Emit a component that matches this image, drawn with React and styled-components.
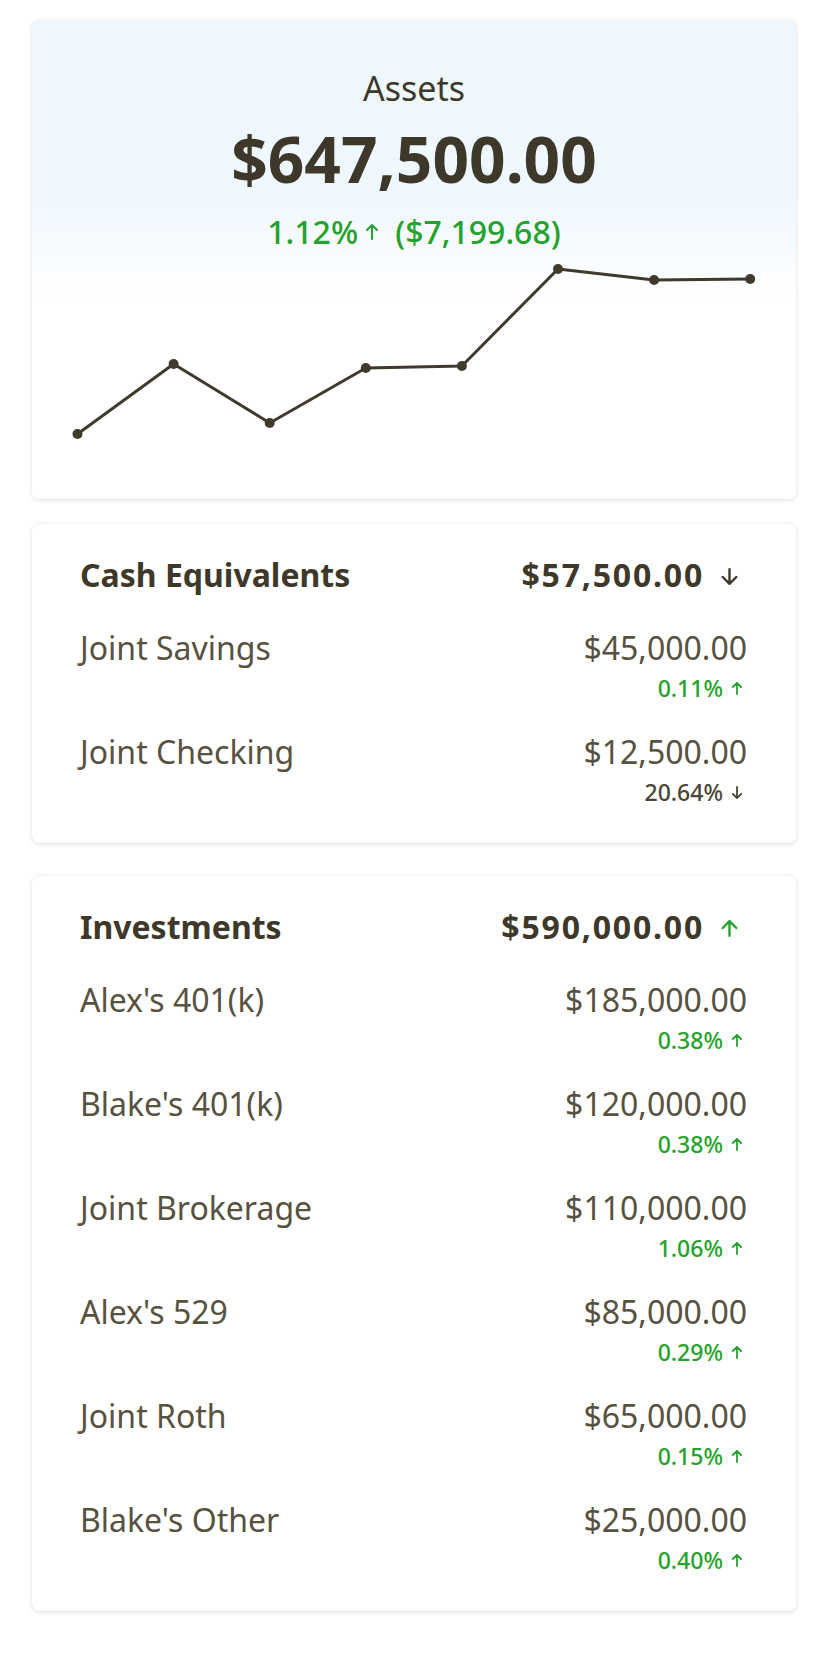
import styled, { createGlobalStyle } from "styled-components";

const GlobalStyle = createGlobalStyle`
	body {
		margin: 0;
		background: #ffffff;
		font-family: "Noto Sans", "Open Sans", sans-serif;
		color: #3d3829;
	}
`;

const history = [184, 114, 173, 118, 116, 19, 30, 29];

const groups = [
	{
		name: "Cash Equivalents",
		total: "$57,500.00",
		up: false,
		accounts: [
			{ name: "Joint Savings", amount: "$45,000.00", change: "0.11%", up: true },
			{ name: "Joint Checking", amount: "$12,500.00", change: "20.64%", up: false },
		],
	},
	{
		name: "Investments",
		total: "$590,000.00",
		up: true,
		accounts: [
			{ name: "Alex's 401(k)", amount: "$185,000.00", change: "0.38%", up: true },
			{ name: "Blake's 401(k)", amount: "$120,000.00", change: "0.38%", up: true },
			{ name: "Joint Brokerage", amount: "$110,000.00", change: "1.06%", up: true },
			{ name: "Alex's 529", amount: "$85,000.00", change: "0.29%", up: true },
			{ name: "Joint Roth", amount: "$65,000.00", change: "0.15%", up: true },
			{ name: "Blake's Other", amount: "$25,000.00", change: "0.40%", up: true },
		],
	},
];

function Arrow({ up, w, h, stroke, className }) {
	const head = Math.min(w / 2 - stroke / 2, h * 0.4);
	const cx = w / 2;
	const top = stroke / 2;
	const bottom = h - stroke / 2;
	const d = up
		? `M${cx} ${bottom}V${top}M${cx - head} ${top + head}L${cx} ${top}L${cx + head} ${top + head}`
		: `M${cx} ${top}V${bottom}M${cx - head} ${bottom - head}L${cx} ${bottom}L${cx + head} ${bottom - head}`;
	return (
		<svg className={className} width={w} height={h} viewBox={`0 0 ${w} ${h}`}>
			<path d={d} fill="none" stroke="currentColor" strokeWidth={stroke} strokeLinecap="round" strokeLinejoin="round" />
		</svg>
	);
}

function Chart() {
	const step = 96.1;
	const pts = history.map((y, i) => [45.5 + i * step, y]);
	return (
		<ChartSvg viewBox="0 0 764 220" preserveAspectRatio="none">
			<polyline
				points={pts.map((p) => p.join(",")).join(" ")}
				fill="none"
				stroke="#3f3a2c"
				strokeWidth="3"
				strokeLinejoin="round"
			/>
			{pts.map(([x, y], i) => (
				<circle key={i} cx={x} cy={y} r="5" fill="#3f3a2c" />
			))}
		</ChartSvg>
	);
}

export default function App() {
	return (
		<>
			<GlobalStyle />
			<Page>
				<SummaryCard>
					<Title>Assets</Title>
					<Total>$647,500.00</Total>
					<Change>
						1.12%
						<Arrow up w={12} h={16} stroke={2} className="arrow" />
						($7,199.68)
					</Change>
					<Chart />
				</SummaryCard>

				<Groups>
					{groups.map((g) => (
						<GroupCard key={g.name}>
							<GroupHead>
								<GroupName>{g.name}</GroupName>
								<GroupTotal $up={g.up}>
									{g.total}
									<Arrow up={g.up} w={17} h={17} stroke={2.4} className="arrow" />
								</GroupTotal>
							</GroupHead>
							<Rows>
								{g.accounts.map((a) => (
									<Row key={a.name}>
										<AccountName>{a.name}</AccountName>
										<Figures>
											<Amount>{a.amount}</Amount>
											<Pct $up={a.up}>
												{a.change}
												<Arrow up={a.up} w={10} h={13} stroke={1.8} className="arrow" />
											</Pct>
										</Figures>
									</Row>
								))}
							</Rows>
						</GroupCard>
					))}
				</Groups>
			</Page>
		</>
	);
}

const Page = styled.div`
	display: flex;
	flex-direction: column;
	gap: 25px;
	padding: 20px 34px 40px 32px;
`;

const Card = styled.section`
	background: #ffffff;
	border-radius: 7px;
	box-shadow: 0 1px 4px rgba(60, 50, 30, 0.16), 0 0 1px rgba(60, 50, 30, 0.08);
`;

const SummaryCard = styled(Card)`
	display: flex;
	flex-direction: column;
	align-items: center;
	padding: 48px 0 29px;
	background: linear-gradient(180deg, #edf7fd 0%, #eff8fe 36%, #f7fbff 48%, #ffffff 58%);
`;

const Title = styled.div`
	font-size: 34px;
	line-height: 40px;
	font-weight: 400;
	color: #3d3829;
`;

const Total = styled.div`
	margin-top: 15px;
	font-size: 64px;
	line-height: 72px;
	font-weight: 700;
	color: #3d3829;
`;

const Change = styled.div`
	margin-top: 19px;
	display: flex;
	align-items: center;
	font-size: 32px;
	line-height: 36px;
	font-weight: 500;
	color: #25a22c;
	.arrow {
		margin: 0 17px 0 8px;
	}
`;

const ChartSvg = styled.svg`
	display: block;
	width: 100%;
	height: 220px;
`;

const Groups = styled.div`
	display: flex;
	flex-direction: column;
	gap: 33px;
`;

const GroupCard = styled(Card)`
	padding: 31px 49px 37px 48px;
`;

const GroupHead = styled.div`
	display: flex;
	justify-content: space-between;
	align-items: center;
	height: 40px;
`;

const GroupName = styled.h2`
	margin: 0;
	font-size: 32px;
	line-height: 40px;
	font-weight: 700;
	color: #3d3829;
`;

const GroupTotal = styled.div`
	display: flex;
	align-items: center;
	font-size: 32px;
	line-height: 40px;
	font-weight: 700;
	letter-spacing: 1.8px;
	color: #3d3829;
	.arrow {
		margin: 2px 9px 0 17px;
		color: ${(p) => (p.$up ? "#25a22c" : "#3d3829")};
	}
`;

const Rows = styled.div`
	display: flex;
	flex-direction: column;
	gap: 31px;
	margin-top: 34px;
`;

const Row = styled.div`
	display: flex;
	justify-content: space-between;
	align-items: flex-start;
`;

const AccountName = styled.div`
	font-size: 32px;
	line-height: 38px;
	color: #57513f;
`;

const Figures = styled.div`
	display: flex;
	flex-direction: column;
	align-items: flex-end;
	gap: 7px;
`;

const Amount = styled.div`
	font-size: 32px;
	line-height: 38px;
	color: #57513f;
`;

const Pct = styled.div`
	display: flex;
	align-items: center;
	font-size: 23px;
	line-height: 28px;
	font-weight: 500;
	color: ${(p) => (p.$up ? "#25a22c" : "#4a4536")};
	.arrow {
		margin: 0 5px 0 9px;
	}
`;
